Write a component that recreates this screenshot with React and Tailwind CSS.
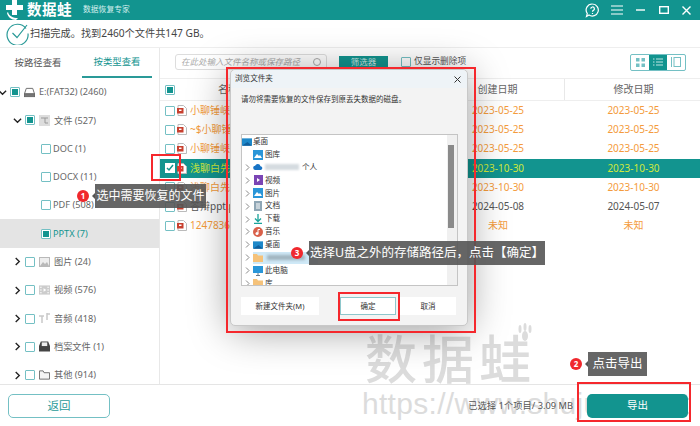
import React from 'react';

const FONT = '[font-family:"Noto_Sans","Noto_Sans_CJK_SC",sans-serif]';

const treeRows = [
  { label: 'E:(FAT32) (2460)', pad: '-ml-[3px]', chevron: 'down', state: 'partial', icon: 'drive' },
  { label: '文件 (527)', pad: 'pl-[12px]', chevron: 'down', state: 'partial', icon: 'file' },
  { label: 'DOC (1)', pad: 'pl-[41px]', state: 'empty' },
  { label: 'DOCX (11)', pad: 'pl-[41px]', state: 'empty' },
  { label: 'PDF (508)', pad: 'pl-[41px]', state: 'empty' },
  { label: 'PPTX (7)', pad: 'pl-[41px]', state: 'partial', active: true },
  { label: '图片 (24)', pad: 'pl-[12px]', chevron: 'right', state: 'empty', icon: 'image' },
  { label: '视频 (576)', pad: 'pl-[12px]', chevron: 'right', state: 'empty', icon: 'video' },
  { label: '音频 (418)', pad: 'pl-[12px]', chevron: 'right', state: 'empty', icon: 'audio' },
  { label: '档案文件 (1)', pad: 'pl-[12px]', chevron: 'right', state: 'empty', icon: 'archive' },
  { label: '其他 (914)', pad: 'pl-[12px]', chevron: 'right', state: 'empty', icon: 'folder' },
];

const fileRows = [
  { name: '小聊锤峡.pptx', created: '2023-05-25', modified: '2023-05-25', tone: 'orange' },
  { name: '~$小聊锤峡.pptx', created: '2023-05-25', modified: '2023-05-25', tone: 'orange' },
  { name: '小聊锤峡.pptx', created: '2023-05-25', modified: '2023-05-25', tone: 'orange' },
  { name: '浅聊白先生.pptx', created: '2023-10-30', modified: '2023-10-30', tone: 'selected' },
  { name: '浅聊白先生.pptx', created: '2023-10-30', modified: '2023-10-30', tone: 'orange' },
  { name: '答辩ppt.pptx', created: '2024-05-08', modified: '2024-05-07', tone: 'dark' },
  { name: '1247836.pptx', created: '未知', modified: '未知', tone: 'orange' },
];

const folderRows = [
  { label: '桌面', icon: 'desk', root: true },
  { label: '图库', icon: 'pic' },
  { label: '个人', icon: 'cloud', arrow: true, blurred: true },
  { label: '视频', icon: 'vid', arrow: true },
  { label: '图片', icon: 'pic', arrow: true },
  { label: '文档', icon: 'doc', arrow: true },
  { label: '下载', icon: 'down', arrow: true },
  { label: '音乐', icon: 'music', arrow: true },
  { label: '桌面', icon: 'desk', arrow: true },
  { label: '', icon: 'fold', arrow: true, highlight: true },
  { label: '此电脑', icon: 'pc', arrow: true },
  { label: '库', icon: 'fold', arrow: true },
];

function Check({ state, size = 'w-[10px] h-[10px]' }) {
  return (
    <span className={`${size} shrink-0 border border-[#74c0c4] bg-white flex items-center justify-center rounded-[1px]`}>
      {state === 'partial' && <span className="w-[6px] h-[6px] bg-[#12948f]" />}
    </span>
  );
}

function Chevron({ dir }) {
  return (
    <svg width="9" height="9" viewBox="0 0 10 10" className="shrink-0" fill="none" stroke="#222" strokeWidth="1.5">
      {dir === 'down' ? <path d="M1 3l4 4 4-4" /> : <path d="M3 1l4 4-4 4" />}
    </svg>
  );
}

function TreeIcon({ type }) {
  const grey = '#b9b9b9';
  if (type === 'drive') return (
    <svg width="12" height="11" viewBox="0 0 12 11" fill="none" stroke="#666"><path d="M2.5 1h7l2 6h-11z" /><rect x=".5" y="7" width="11" height="3" fill="#777" /></svg>
  );
  if (type === 'file') return (
    <svg width="11" height="11" viewBox="0 0 11 11"><rect width="11" height="11" fill="#ddd" /><path d="M2 3h7M6 3v5h3" stroke="#999" fill="none" /></svg>
  );
  if (type === 'image') return (
    <svg width="11" height="10" viewBox="0 0 11 10"><rect x=".5" y=".5" width="10" height="9" fill="#eee" stroke={grey} /><path d="M1 9l3-4 2 2 2-2 2 4z" fill={grey} /></svg>
  );
  if (type === 'video') return (
    <svg width="12" height="10" viewBox="0 0 12 10"><rect width="12" height="10" fill="#ccc" /><path d="M1 2h2M1 5h2M1 8h2M9 2h2M9 5h2M9 8h2" stroke="#fff" /><path d="M5 3l3 2-3 2z" fill="#fff" /></svg>
  );
  if (type === 'audio') return (
    <svg width="11" height="11" viewBox="0 0 11 11" fill="none" stroke="#c9c9c9" strokeWidth="1.5"><path d="M0 3h5M3 3v7M8 0v7M8 1h3" /></svg>
  );
  if (type === 'archive') return (
    <svg width="12" height="11" viewBox="0 0 12 11"><path d="M2 0h8l2 5v6H0V5z" fill="#444" /><rect x="3" y="1" width="6" height="4" fill="#eee" /></svg>
  );
  return (
    <svg width="12" height="10" viewBox="0 0 12 10" fill="#f4f4f4" stroke="#666"><path d="M.5 9.5v-9h4l1 2h6v7z" /></svg>
  );
}

function TreeRow({ row }) {
  return (
    <div className={`h-[28.3px] flex items-center ${row.pad} ${row.active ? 'bg-[#e4e4e4]' : ''}`}>
      {row.chevron && <span className="w-[10px] mr-[3px] flex justify-center"><Chevron dir={row.chevron} /></span>}
      <span className={row.icon ? 'mr-[4px]' : 'mr-[2px]'}><Check state={row.state} /></span>
      {row.icon && <span className="w-[11px] mr-[4px] flex justify-center"><TreeIcon type={row.icon} /></span>}
      <span className={`text-[9.2px] ${row.active ? 'text-[#12948f]' : 'text-[#666]'} whitespace-nowrap`}>{row.label}</span>
    </div>
  );
}

function PptIcon() {
  return (
    <svg width="10" height="11" viewBox="0 0 10 11" className="shrink-0">
      <path d="M1 .5h5.5L9.500 3.500v7H1z" fill="#fff" stroke="#bbb" />
      <rect x="0" y="3" width="6.500" height="5.500" fill="#c8402f" />
      <path d="M2 4.500h2.500v1.500H2z" fill="#fff" />
    </svg>
  );
}

function FileRow({ row }) {
  const selected = row.tone === 'selected';
  const color = selected ? 'text-[#cfe93c]' : row.tone === 'orange' ? 'text-[#f49b3c]' : 'text-[#555]';
  return (
    <div className={`h-[19.2px] flex items-center text-[10px] ${color} ${selected ? 'bg-[#12948f]' : ''}`}>
      <span className="w-[271px] flex items-center pl-[5px] gap-[2px] overflow-hidden">
        {selected ? (
          <span className="w-[10px] h-[10px] bg-white flex items-center justify-center shrink-0">
            <svg width="8" height="8" viewBox="0 0 8 8" fill="none" stroke="#12948f" strokeWidth="1.500"><path d="M1 4l2 2 4-5" /></svg>
          </span>
        ) : <Check state="empty" />}
        <PptIcon />
        <span className="ml-[1px] whitespace-nowrap">{row.name}</span>
      </span>
      <span className="w-[134px] text-center">{row.created}</span>
      <span className="flex-1 text-center pl-[2px]">{row.modified}</span>
    </div>
  );
}

function FolderIcon({ type }) {
  if (type === 'desk') return <svg width="10" height="8" viewBox="0 0 11 8"><rect width="11" height="8" fill="#1e88c9" /><path d="M0 8l6-4 5 4z" fill="#0f5f9e" /></svg>;
  if (type === 'pic') return <svg width="10" height="10" viewBox="0 0 10 10"><rect width="10" height="10" fill="#2a96d8" /><path d="M1 8l3-4 2 2 1-1 2 3z" fill="#fff" /></svg>;
  if (type === 'cloud') return <svg width="10" height="6" viewBox="0 0 12 7"><path d="M3 7a2.500 2.500 0 0 1-.5-5A3.500 3.500 0 0 1 9 2.500 2.300 2.300 0 0 1 9.500 7z" fill="#1773c5" /></svg>;
  if (type === 'vid') return <svg width="9" height="10" viewBox="0 0 9 10"><rect width="9" height="10" fill="#7b45b5" /><path d="M3 3l3 2-3 2z" fill="#fff" /></svg>;
  if (type === 'doc') return <svg width="8" height="10" viewBox="0 0 8 10"><rect width="8" height="10" fill="#8fa6b5" /><path d="M2 3h4M2 5h4M2 7h4" stroke="#fff" /></svg>;
  if (type === 'down') return <svg width="10" height="10" viewBox="0 0 10 10" fill="none" stroke="#19a39a" strokeWidth="1.300"><path d="M5 0v7M2 4.500L5 7.500l3-3M1 9.500h8" /></svg>;
  if (type === 'music') return <svg width="10" height="10" viewBox="0 0 10 10"><circle cx="5" cy="5" r="5" fill="#d9604a" /><circle cx="4" cy="6.500" r="1.500" fill="#fff" /><path d="M5 6.500V2.500h2" stroke="#fff" fill="none" /></svg>;
  if (type === 'pc') return <svg width="10" height="10" viewBox="0 0 10 10"><rect width="10" height="7" fill="#2a96d8" /><path d="M3 9.500h4M5 7v2" stroke="#678" /></svg>;
  return <svg width="10" height="8" viewBox="0 0 10 8"><path d="M0 0h4l1 1.500h5V8H0z" fill="#f5c27a" /></svg>;
}

function FolderRow({ row }) {
  return (
    <div className={`h-[12.9px] flex items-center text-[7.6px] text-[#333] ${row.root ? 'pl-0' : 'pl-[3px]'}`}>
      {!row.root && (
        <span className="w-[8px] shrink-0">
          {row.arrow && <svg width="5" height="7" viewBox="0 0 5 7" fill="none" stroke="#888"><path d="M1 .5l3 3-3 3" /></svg>}
        </span>
      )}
      <span className={`w-[10px] flex justify-center shrink-0 ${row.root ? 'mr-[1px]' : row.highlight ? 'bg-[#cfe9f7] h-[12px] items-center' : 'mr-[2px]'}`}><FolderIcon type={row.icon} /></span>
      {row.blurred && <span className="w-[34px] h-[6px] mr-[3px] bg-[#d5dbe0] blur-[1px]" />}
      {row.highlight && (
        <span className="w-[55px] h-[12px] bg-[#cfe9f7] flex items-center pl-[4px]">
          <span className="w-[38px] h-[5px] bg-[#9fb2bd] blur-[1.5px]" />
        </span>
      )}
      <span>{row.label}</span>
    </div>
  );
}

function Callout({ num, text, className, boxClass }) {
  return (
    <div className={`absolute flex items-center ${className}`}>
      <span className="w-[12px] h-[12px] rounded-full bg-[#f0282d] text-white text-[8px] font-bold flex items-center justify-center shrink-0">{num}</span>
      <span className="w-0 h-0 ml-[3px] border-y-[3px] border-y-transparent border-r-[3px] border-r-[#555]" />
      <span className={`h-[24px] bg-[#555]/90 text-white flex items-center justify-center whitespace-nowrap ${boxClass}`}>{text}</span>
    </div>
  );
}

export default function App() {
  return (
    <div className={`relative w-[700px] h-[426px] overflow-hidden bg-white ${FONT}`}>
      {/* title bar */}
      <div className="h-[20px] bg-[#12948f] flex items-center text-white">
        <svg width="17" height="20" viewBox="0 0 17 20" className="ml-[6px]" fill="#fff">
          <path d="M6 0h5v5h6v5h-6v5H6V10H0V5h6z" />
          <path d="M2 12c1 4 5 6 10 6l-2 2c-5 0-8-3-9-7z" />
        </svg>
        <span className="ml-[4px] text-[14.5px] font-bold tracking-[0.5px]">数据蛙</span>
        <span className="ml-[11px] text-[7.8px] text-[#d5efee]">数据恢复专家</span>
        <div className="ml-auto flex items-center mr-[9px]">
          <svg width="15" height="15" viewBox="0 0 15 15" fill="none" stroke="#fff" strokeWidth="1.200">
            <path d="M7.500 1a6 6 0 1 1-3.500 11l-2.500 1.500.8-3A6 6 0 0 1 7.500 1z" />
            <path d="M5.800 5.800a1.800 1.800 0 1 1 2.600 1.600c-.6.3-.9.7-.9 1.400M7.500 10v1" />
          </svg>
          <svg width="12" height="10" viewBox="0 0 12 10" className="ml-[11px]" stroke="#fff" strokeWidth="1.200"><path d="M0 1h12M0 5h12M0 9h12" /></svg>
          <svg width="9" height="2" viewBox="0 0 9 2" className="ml-[13px]" stroke="#fff" strokeWidth="1.400"><path d="M0 1h9" /></svg>
          <svg width="10" height="8" viewBox="0 0 10 8" className="ml-[14px]" fill="none" stroke="#fff" strokeWidth="1.400"><rect x=".7" y=".7" width="8.600" height="6.600" /></svg>
          <svg width="9" height="9" viewBox="0 0 9 9" className="ml-[13px]" stroke="#fff" strokeWidth="1.400"><path d="M.5.500l8 8M8.500.500l-8 8" /></svg>
        </div>
      </div>

      {/* scan status */}
      <div className="h-[28px] flex items-center border-b border-[#eee] pl-[6px]">
        <svg width="23" height="23" viewBox="0 0 23 23" fill="none" stroke="#2a9a98" strokeWidth="1.200">
          <path d="M20 6.500A10.500 10.500 0 1 0 22 11.500" />
          <path d="M6.500 11l4.500 4.500L21 3" />
        </svg>
        <span className="ml-[1px] text-[10.2px] text-[#444]">扫描完成。找到2460个文件共147 GB。</span>
      </div>

      <div className="flex h-[336px]">
        {/* left tree */}
        <div className="w-[160px] shrink-0 border-r border-[#e8e8e8] overflow-hidden">
          <div className="h-[30px] flex text-[9.4px]">
            <span className="w-[76px] flex items-center justify-center text-[#555]">按路径查看</span>
            <span className="ml-[6px] w-[70px] flex items-center justify-center text-[#12948f] border-b-2 border-[#2a9a98]">按类型查看</span>
          </div>
          {treeRows.map((row) => <TreeRow key={row.label} row={row} />)}
        </div>

        {/* file list */}
        <div className="flex-1 min-w-0">
          <div className="h-[30px] flex items-center pl-[15px] pb-[2px]">
            <div className="w-[152px] h-[16px] border border-[#ddd] rounded-[3px] flex items-center justify-between px-[5px] text-[8.5px] italic text-[#aaa] whitespace-nowrap overflow-hidden">
              <span>在此处输入文件名称或保存路径</span>
              <svg width="8" height="8" viewBox="0 0 8 8" fill="none" stroke="#aaa" className="shrink-0"><circle cx="4" cy="4" r="3.500" /></svg>
            </div>
            <span className="ml-[12px] w-[49px] h-[13px] bg-[#12948f] text-[#cdeae8] text-[8.5px] flex items-center justify-center">筛选器</span>
            <span className="ml-[13px]"><Check state="empty" /></span>
            <span className="ml-[3px] text-[8.7px] text-[#555]">仅显示删除项</span>
            <div className="ml-auto mr-[14px] w-[56px] h-[17px] border border-[#74c0c4] rounded-[2px] flex">
              <span className="flex-1 flex items-center justify-center">
                <svg width="9" height="9" viewBox="0 0 9 9" fill="#74c0c4"><rect width="3.500" height="3.500" /><rect x="5.500" width="3.500" height="3.500" /><rect y="5.500" width="3.500" height="3.500" /><rect x="5.500" y="5.500" width="3.500" height="3.500" /></svg>
              </span>
              <span className="flex-1 bg-[#12948f] flex items-center justify-center">
                <svg width="10" height="8" viewBox="0 0 10 8" stroke="#bfe5e3"><path d="M0 1h1.500M3 1h7M0 4h1.500M3 4h7M0 7h1.500M3 7h7" /></svg>
              </span>
              <span className="flex-1 flex items-center justify-center">
                <svg width="10" height="10" viewBox="0 0 10 10" fill="none" stroke="#74c0c4"><path d="M.5 0v10" /><rect x="3" y=".5" width="6.500" height="9" /></svg>
              </span>
            </div>
          </div>
          <div className="h-[23px] flex items-center border-y border-[#eee] text-[10px] text-[#666]">
            <span className="w-[271px] flex items-center pl-[5px] shrink-0">
              <Check state="partial" />
              <span className="ml-[43px]">名称</span>
            </span>
            <span className="w-[134px] h-full flex items-center justify-center border-r border-[#e8e8e8]">创建日期</span>
            <span className="flex-1 text-center pl-[2px]">修改日期</span>
          </div>
          {fileRows.map((row, idx) => <FileRow key={idx} row={row} />)}
        </div>
      </div>

      {/* bottom bar */}
      <div className="h-[42px] border-t border-[#e5e5e5] flex items-center relative">
        <button className="ml-[8px] w-[102px] h-[24px] border border-[#74c0c4] rounded-[5px] text-[11.5px] text-[#2a9a98]">返回</button>
        <span className="ml-auto mr-[14px] text-[9.3px] text-[#555] relative z-10">已选择 1个项目/ 3.09 MB</span>
        <button className="mr-[12px] w-[101px] h-[24px] rounded-[5px] bg-[#12948f] text-white text-[10.5px] relative z-10">导出</button>
      </div>

      {/* watermark */}
      <div className="absolute left-[365px] top-[329px] text-[52px] leading-[60px] font-medium text-[#dcdcdc] tracking-[5px] whitespace-nowrap">数据蛙</div>
      <svg width="18" height="20" viewBox="0 0 18 20" className="absolute left-[516px] top-[323px]" fill="#dcdcdc">
        <ellipse cx="9" cy="13" rx="3" ry="5" /><ellipse cx="4" cy="6" rx="1.500" ry="4" /><ellipse cx="9" cy="4" rx="1.500" ry="4" /><ellipse cx="14" cy="6" rx="1.500" ry="4" />
      </svg>
      <div className="absolute left-[362px] top-[385px] text-[30px] leading-[38px] [font-family:'Liberation_Sans',sans-serif] text-[#dcdcdc] tracking-[0.3px] whitespace-nowrap">https://www.shujuwa.net</div>

      {/* folder dialog */}
      <div className="absolute left-[230px] top-[69px] w-[238px] h-[257px] rounded-[5px] bg-[#f3f3f3] border border-[#c8c8c8] shadow-[0_4px_40px_rgba(0,0,0,0.4)] flex flex-col z-20">
        <div className="h-[18px] bg-[#eef3f7] rounded-t-[5px] flex items-center justify-between pl-[4px] pr-[6px] text-[7.6px] text-[#333] shrink-0">
          <span>浏览文件夹</span>
          <svg width="7" height="7" viewBox="0 0 7 7" stroke="#333"><path d="M.5.500l6 6M6.500.500l-6 6" /></svg>
        </div>
        <p className="mt-[6px] ml-[10px] text-[7.5px] text-[#333] whitespace-nowrap">请勿将需要恢复的文件保存到原丢失数据的磁盘。</p>
        <div className="mt-[29px] ml-[10px] w-[217px] h-[152px] bg-white border border-[#c4c4c4] flex overflow-hidden shrink-0">
          <div className="flex-1 min-w-0">
            {folderRows.map((row, idx) => <FolderRow key={idx} row={row} />)}
          </div>
          <div className="w-[10px] bg-[#f0f0f0] pl-[1px] pt-[10px]">
            <div className="w-[6px] h-[83px] bg-[#8a8a8a]" />
          </div>
        </div>
        <div className="mt-[11px] ml-[10px] flex text-[7.5px] text-[#333]">
          <span className="w-[78px] h-[18px] bg-white flex items-center justify-center">新建文件夹(M)</span>
          <span className="ml-[21px] w-[56px] h-[18px] bg-white border border-[#8ec7cc] flex items-center justify-center">确定</span>
          <span className="ml-[4px] w-[56px] h-[18px] bg-white flex items-center justify-center">取消</span>
        </div>
      </div>

      {/* red highlight boxes */}
      <div className="absolute z-30 left-[226px] top-[67px] w-[250px] h-[266px] border-2 border-[#f5282d]" />
      <div className="absolute z-30 left-[338px] top-[292px] w-[62px] h-[29px] border-2 border-[#f5282d]" />
      <div className="absolute z-30 left-[151px] top-[154px] w-[30px] h-[27px] border-2 border-[#f5282d]" />
      <div className="absolute z-30 left-[577px] top-[382px] w-[114px] h-[40px] border-2 border-[#f5282d]" />

      {/* step callouts */}
      <Callout num="1" text="选中需要恢复的文件" className="z-40 left-[77px] top-[184px]" boxClass="w-[111px] text-[12px]" />
      <Callout num="2" text="点击导出" className="z-40 left-[570px] top-[352px]" boxClass="w-[59px] text-[12.5px]" />
      <Callout num="3" text="选择U盘之外的存储路径后，点击【确定】" className="z-40 left-[291px] top-[241px]" boxClass="w-[236px] text-[12.5px]" />
    </div>
  );
}
